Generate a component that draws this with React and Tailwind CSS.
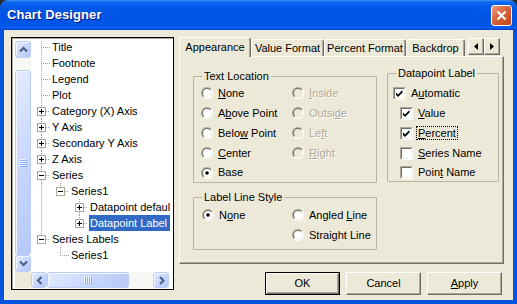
import React from 'react';

const DOT = '#a0a0a0';

function Guide({ on }) {
  return (
    <svg width="19" height="16" className="shrink-0 block" shapeRendering="crispEdges">
      {on && <line x1="10.5" y1="0" x2="10.5" y2="16" stroke={DOT} strokeDasharray="1 1" />}
    </svg>
  );
}

function Own({ last, box }) {
  return (
    <svg width="19" height="16" className="shrink-0 block" shapeRendering="crispEdges">
      <line x1="10.5" y1="0" x2="10.5" y2={box ? 4 : 9} stroke={DOT} strokeDasharray="1 1" />
      {!last && <line x1="10.5" y1={box ? 13 : 8} x2="10.5" y2="16" stroke={DOT} strokeDasharray="1 1" />}
      <line x1={box ? 15 : 10} y1="8.5" x2="19" y2="8.5" stroke={DOT} strokeDasharray="1 1" />
      {box && (
        <>
          <rect x="6.5" y="4.5" width="8" height="8" fill="#fff" stroke="#aca899" />
          <line x1="8" y1="8.5" x2="13" y2="8.5" stroke="#000" />
          {box === '+' && <line x1="10.5" y1="6" x2="10.5" y2="11" stroke="#000" />}
        </>
      )}
    </svg>
  );
}

const tree = [
  { t: 'Title', g: [], last: false },
  { t: 'Footnote', g: [], last: false },
  { t: 'Legend', g: [], last: false },
  { t: 'Plot', g: [], last: false },
  { t: 'Category (X) Axis', g: [], last: false, box: '+' },
  { t: 'Y Axis', g: [], last: false, box: '+' },
  { t: 'Secondary Y Axis', g: [], last: false, box: '+' },
  { t: 'Z Axis', g: [], last: false, box: '+' },
  { t: 'Series', g: [], last: false, box: '-' },
  { t: 'Series1', g: [true], last: true, box: '-' },
  { t: 'Datapoint defaults', g: [true, false], last: false, box: '+' },
  { t: 'Datapoint Label defaults', g: [true, false], last: true, box: '+', sel: true },
  { t: 'Series Labels', g: [], last: true, box: '-' },
  { t: 'Series1', g: [false], last: true },
];

const sbtn =
  'flex items-center justify-center rounded-[3px] border border-[#bccdf7] bg-[linear-gradient(135deg,#e3ebfe_0%,#c8d7fc_50%,#b6c9f7_100%)] shadow-[inset_1px_1px_0_#f4f7ff]';

function Chevron({ dir }) {
  const pts = {
    up: '1,5.5 4.5,2 8,5.5',
    down: '1,1.5 4.5,5 8,1.5',
    left: '5.5,1 2,4.5 5.5,8',
    right: '2,1 5.5,4.5 2,8',
  }[dir];
  const vert = dir === 'up' || dir === 'down';
  return (
    <svg width={vert ? 9 : 7} height={vert ? 7 : 9}>
      <polyline points={pts} fill="none" stroke="#4d6185" strokeWidth="2.2" />
    </svg>
  );
}

function VScroll() {
  return (
    <div className="w-[16px] flex flex-col bg-[#f7f7f3] shrink-0">
      <div className={`h-[17px] ${sbtn}`}>
        <Chevron dir="up" />
      </div>
      <div className="h-[12px]" />
      <div className={`flex-1 ${sbtn}`}>
        <svg width="8" height="8" shapeRendering="crispEdges">
          {[0, 2, 4, 6].map((y) => (
            <g key={y}>
              <line x1="0" y1={y + 0.5} x2="7" y2={y + 0.5} stroke="#eef4fe" />
              <line x1="1" y1={y + 1.5} x2="8" y2={y + 1.5} stroke="#8cb0f8" />
            </g>
          ))}
        </svg>
      </div>
      <div className={`h-[17px] ${sbtn}`}>
        <Chevron dir="down" />
      </div>
    </div>
  );
}

function HScroll() {
  return (
    <div className="flex-1 flex bg-[#f7f7f3]">
      <div className={`w-[16px] ${sbtn}`}>
        <Chevron dir="left" />
      </div>
      <div className={`w-[82px] ${sbtn}`}>
        <svg width="8" height="8" shapeRendering="crispEdges">
          {[0, 2, 4, 6].map((x) => (
            <g key={x}>
              <line x1={x + 0.5} y1="0" x2={x + 0.5} y2="7" stroke="#eef4fe" />
              <line x1={x + 1.5} y1="1" x2={x + 1.5} y2="8" stroke="#8cb0f8" />
            </g>
          ))}
        </svg>
      </div>
      <div className="flex-1" />
      <div className={`w-[16px] ${sbtn}`}>
        <Chevron dir="right" />
      </div>
      <div className="w-[1px] bg-white" />
    </div>
  );
}

function TreePanel() {
  return (
    <div className="w-[163px] h-[253px] border border-black bg-white shadow-[inset_1px_1px_0_#aca899] pt-[3px] pl-[3px] pr-[3px] pb-[1px] flex flex-col shrink-0">
      <div className="flex h-[231px]">
        <VScroll />
        <div className="flex-1 overflow-hidden bg-white">
          <div className="-mt-[2px] flex flex-col">
            {tree.map((r, i) => (
              <div key={i} className="flex h-[16px] items-center">
                {r.g.map((on, j) => (
                  <Guide key={j} on={on} />
                ))}
                <Own last={r.last} box={r.box} />
                <span
                  className={`ml-[1px] px-[1px] h-[16px] leading-[16px] whitespace-nowrap ${
                    r.sel ? 'bg-[#316ac5] text-white' : 'text-black'
                  }`}
                >
                  {r.t}
                </span>
              </div>
            ))}
          </div>
        </div>
      </div>
      <div className="flex h-[16px]">
        <div className="w-[16px] bg-[#ece9d8]" />
        <HScroll />
      </div>
    </div>
  );
}

function Radio({ checked, disabled }) {
  return (
    <svg width="12" height="12" viewBox="0 0 12 12" className="shrink-0 block">
      <defs>
        <linearGradient id="rgo" x1="0" y1="0" x2="1" y2="1">
          <stop offset="0.5" stopColor="#aca899" />
          <stop offset="0.5" stopColor="#ffffff" />
        </linearGradient>
        <linearGradient id="rgi" x1="0" y1="0" x2="1" y2="1">
          <stop offset="0.5" stopColor="#716f64" />
          <stop offset="0.5" stopColor="#f1efe2" />
        </linearGradient>
      </defs>
      <circle cx="6" cy="6" r="6" fill="url(#rgo)" />
      <circle cx="6" cy="6" r="5" fill="url(#rgi)" />
      <circle cx="6" cy="6" r="4" fill={disabled ? '#ece9d8' : '#ffffff'} />
      {checked && <circle cx="6" cy="6" r="1.8" fill="#000" />}
    </svg>
  );
}

function Check({ checked }) {
  return (
    <span className="block w-[13px] h-[13px] shrink-0 border border-t-[#aca899] border-l-[#aca899] border-b-white border-r-white">
      <span className="block w-full h-full border border-t-[#716f64] border-l-[#716f64] border-b-[#f1efe2] border-r-[#f1efe2] bg-white">
        {checked && (
          <svg width="9" height="9" className="block">
            <path d="M1 3.5 L3 5.5 L7.5 1 L7.5 3.5 L3 8 L1 6 Z" fill="#000" />
          </svg>
        )}
      </span>
    </span>
  );
}

const U = ({ children }) => <span className="underline">{children}</span>;
const dis = 'text-[#aca899] [text-shadow:1px_1px_0_#ffffff]';

function RadioItem({ checked, disabled, w, children }) {
  return (
    <div className={`flex items-center gap-[5px] ${w || ''}`}>
      <Radio checked={checked} disabled={disabled} />
      <span className={disabled ? dis : 'text-black'}>{children}</span>
    </div>
  );
}

const fieldset = 'border border-[#b8b4a6] rounded-[1px]';
const legend = 'ml-[8px] px-[2px] leading-[12px] text-black';

function Tabs() {
  const tabs = [
    { t: 'Appearance', w: 'w-[72px]', sel: true },
    { t: 'Value Format', w: 'w-[73px]' },
    { t: 'Percent Format', w: 'w-[82px]' },
    { t: 'Backdrop', w: 'w-[59px]' },
  ];
  return (
    <div className="flex items-end h-[19px]">
      {tabs.map((tb) => (
        <div
          key={tb.t}
          className={`${tb.w} flex items-center justify-center border-t border-l border-r border-t-white border-l-white border-r-[#716f64] rounded-t-[3px] shadow-[inset_-1px_0_0_#aca899] whitespace-nowrap ${
            tb.sel ? 'h-[20px] -mb-[1px] relative z-10 bg-[#ece9d8] pb-[1px]' : 'h-[17px]'
          }`}
        >
          {tb.t}
        </div>
      ))}
      <div className="self-start mt-[1px] ml-[3px] flex">
        {['left', 'right'].map((d) => (
          <div
            key={d}
            className="w-[16px] h-[17px] flex items-center justify-center border border-t-white border-l-white border-r-[#716f64] border-b-[#716f64] shadow-[inset_-1px_-1px_0_#aca899]"
          >
            <svg width="4" height="7">
              {d === 'left' ? <polygon points="4,0 0,3.5 4,7" fill="#000" /> : <polygon points="0,0 4,3.5 0,7" fill="#000" />}
            </svg>
          </div>
        ))}
      </div>
    </div>
  );
}

function Btn({ def, children }) {
  return (
    <div className={`w-[75px] h-[23px] flex ${def ? 'border border-black' : ''}`}>
      <div className="flex-1 flex items-center justify-center border border-t-white border-l-white border-r-[#716f64] border-b-[#716f64] shadow-[inset_-1px_-1px_0_#aca899]">
        {children}
      </div>
    </div>
  );
}

export default function App() {
  return (
    <div className="w-[517px] h-[304px] overflow-hidden flex flex-col bg-[#2a2a2a] font-['Liberation_Sans',Arial,sans-serif] text-[11px] text-black">
      {/* Title bar */}
      <div className="h-[30px] shrink-0 rounded-t-[8px] flex items-center pl-[7px] pr-[5px] bg-[linear-gradient(180deg,#3d8ff5_0%,#0a66f2_8%,#0058e6_28%,#0054e3_55%,#0056e8_85%,#0a5ef3_92%,#0042cf_100%)]">
        <span className="text-[13px] font-bold text-white [text-shadow:1px_1px_0_#0a1a80] tracking-[0.1px]">Chart Designer</span>
        <div className="ml-auto w-[21px] h-[21px] rounded-[3px] border border-white flex items-center justify-center bg-[linear-gradient(135deg,#eb9a7d_0%,#d8643d_45%,#c24317_100%)]">
          <svg width="11" height="11">
            <line x1="1.5" y1="1.5" x2="9.5" y2="9.5" stroke="#fff" strokeWidth="2.2" />
            <line x1="9.5" y1="1.5" x2="1.5" y2="9.5" stroke="#fff" strokeWidth="2.2" />
          </svg>
        </div>
      </div>

      {/* Client */}
      <div className="flex-1 flex bg-[#ece9d8] border-x-4 border-b-4 border-[#0553e1] pl-[7px] pt-[7px]">
        <TreePanel />
        <div className="ml-[5px] w-[325px] flex flex-col">
          <Tabs />
          <div className="h-[208px] border border-t-white border-l-white border-r-[#716f64] border-b-[#716f64] shadow-[inset_-1px_-1px_0_#aca899] flex pl-[13px] pt-[13px]">
            <div className="w-[184px] flex flex-col">
              <fieldset className={`${fieldset} pt-[1px]`}>
                <legend className={legend}>Text Location</legend>
                {[
                  [['', 'N', 'one'], ['', 'I', 'nside']],
                  [['A', 'b', 'ove Point'], ['Outsi', 'd', 'e']],
                  [['Belo', 'w', ' Point'], ['Le', 'f', 't']],
                  [['', 'C', 'enter'], ['', 'R', 'ight']],
                ].map((row, i) => (
                  <div key={i} className="flex h-[20px] items-center pl-[7px]">
                    <RadioItem w="w-[91px]">
                      {row[0][0]}
                      <U>{row[0][1]}</U>
                      {row[0][2]}
                    </RadioItem>
                    <RadioItem disabled>
                      {row[1][0]}
                      <U>{row[1][1]}</U>
                      {row[1][2]}
                    </RadioItem>
                  </div>
                ))}
                <div className="flex h-[19px] items-center pl-[7px]">
                  <RadioItem checked w="w-[91px]">
                    Base
                  </RadioItem>
                </div>
              </fieldset>
              <fieldset className={`${fieldset} mt-[8px] pt-[2px] pb-[4px]`}>
                <legend className={legend}>Label Line Style</legend>
                <div className="flex h-[20px] items-center pl-[8px]">
                  <RadioItem checked w="w-[90px]">
                    N<U>o</U>ne
                  </RadioItem>
                  <RadioItem>
                    Angled <U>L</U>ine
                  </RadioItem>
                </div>
                <div className="flex h-[20px] items-center pl-[98px]">
                  <RadioItem>Straight Line</RadioItem>
                </div>
              </fieldset>
            </div>
            <fieldset className={`${fieldset} ml-[10px] w-[112px] -mt-[3px] self-start pt-[4px]`}>
              <legend className={legend}>Datapoint Label</legend>
              <div className="flex h-[20px] items-center gap-[5px] pl-[5px]">
                <Check checked />
                <span>
                  A<U>u</U>tomatic
                </span>
              </div>
              <div className="flex h-[20px] items-center gap-[5px] pl-[12px]">
                <Check checked />
                <span>
                  <U>V</U>alue
                </span>
              </div>
              <div className="flex h-[20px] items-center gap-[5px] pl-[12px]">
                <Check checked />
                <span className="border border-dotted border-black px-[1px] -ml-[2px] leading-[12px]">
                  <U>P</U>ercent
                </span>
              </div>
              <div className="flex h-[20px] items-center gap-[5px] pl-[12px]">
                <Check />
                <span>
                  <U>S</U>eries Name
                </span>
              </div>
              <div className="flex h-[18px] items-center gap-[5px] pl-[12px]">
                <Check />
                <span>
                  Poin<U>t</U> Name
                </span>
              </div>
            </fieldset>
          </div>
          <div className="mt-[8px] flex justify-end gap-[6px] pr-[2px]">
            <Btn def>OK</Btn>
            <Btn>Cancel</Btn>
            <Btn>
              <U>A</U>pply
            </Btn>
          </div>
        </div>
      </div>
    </div>
  );
}
